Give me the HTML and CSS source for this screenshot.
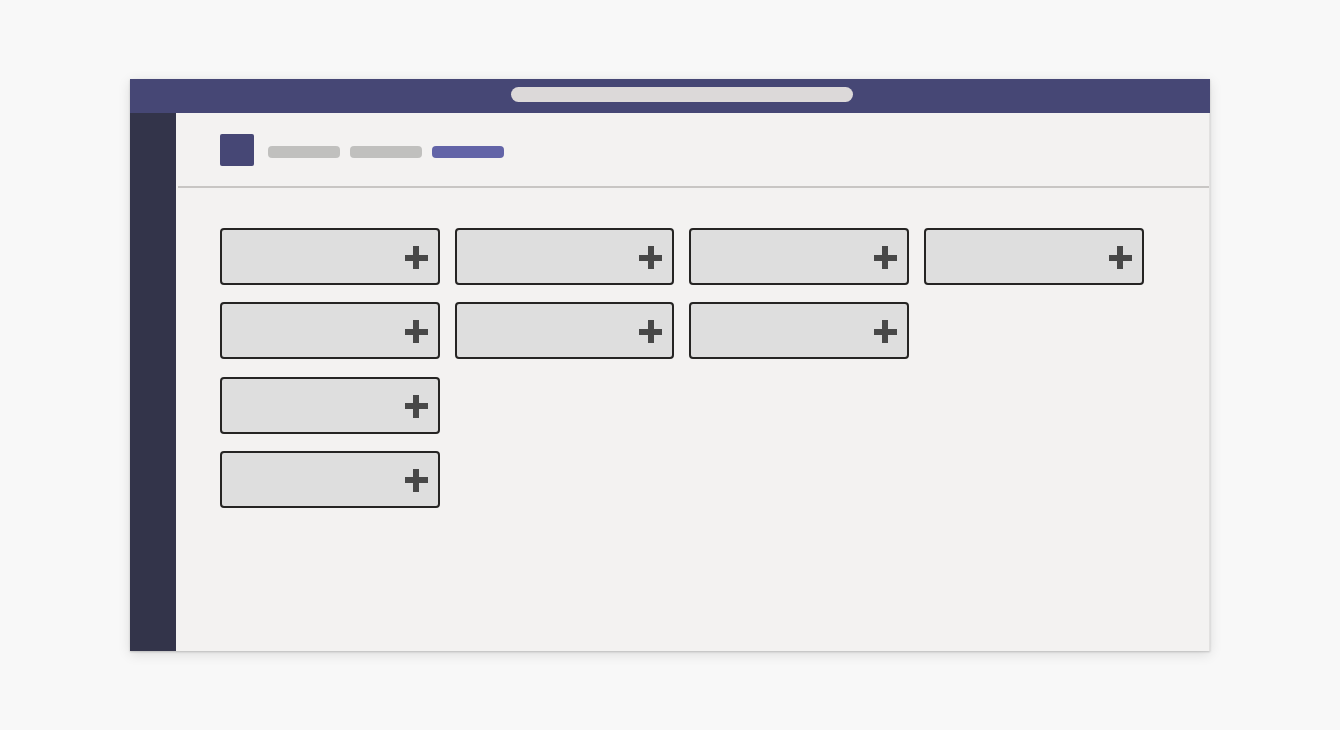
FILE: index.html
```html
<!DOCTYPE html>
<html lang="en">
<head>
<meta charset="utf-8">
<title>App layout</title>
<link rel="stylesheet" href="styles.css">
</head>
<body>
<div class="window">
  <div class="titlebar"><div class="search"></div></div>
  <div class="frame">
    <div class="sidebar"></div>
    <div class="main">
      <div class="header">
        <div class="logo"></div>
        <div class="tabs">
          <div class="tab"></div>
          <div class="tab"></div>
          <div class="tab active"></div>
        </div>
      </div>
      <div class="divider"></div>
      <div class="grid">
        <div class="card"><span class="plus"></span></div>
        <div class="card"><span class="plus"></span></div>
        <div class="card"><span class="plus"></span></div>
        <div class="card"><span class="plus"></span></div>
        <div class="card"><span class="plus"></span></div>
        <div class="card"><span class="plus"></span></div>
        <div class="card"><span class="plus"></span></div>
        <div class="card first-col"><span class="plus"></span></div>
        <div class="card first-col"><span class="plus"></span></div>
      </div>
    </div>
  </div>
</div>
</body>
</html>
```
FILE: styles.css
```css
html, body {
  margin: 0;
  padding: 0;
  background: #f8f8f8;
  font-family: "Liberation Sans", Arial, sans-serif;
}
body {
  padding: 79px 0 0 130px;
  height: 730px;
  box-sizing: border-box;
}
.window {
  width: 1080px;
  height: 572px;
  display: flex;
  flex-direction: column;
  background: #f3f2f1;
  box-shadow: 0 1px 2px rgba(0,0,0,0.18), 0 3px 12px rgba(0,0,0,0.12);
}
.titlebar {
  height: 34px;
  flex: none;
  background: #464775;
  padding: 8px 0 0 381px;
  box-sizing: border-box;
}
.search {
  width: 342px;
  height: 15px;
  border-radius: 8px;
  background: #dcd9d9;
}
.frame {
  flex: 1;
  display: flex;
}
.sidebar {
  width: 46px;
  flex: none;
  background: #33344a;
}
.main {
  flex: 1;
  display: flex;
  flex-direction: column;
  padding-left: 2px;
  border-right: 1px solid #e2e1e0;
}
.header {
  height: 73px;
  box-sizing: border-box;
  padding: 21px 0 0 42px;
  display: flex;
  align-items: flex-start;
}
.logo {
  width: 34px;
  height: 32px;
  background: #464775;
  border-radius: 2px;
}
.tabs {
  display: flex;
  gap: 10px;
  margin: 12px 0 0 14px;
}
.tab {
  width: 72px;
  height: 12px;
  border-radius: 4px;
  background: #c0c0be;
}
.tab.active {
  background: #6264a7;
}
.divider {
  height: 2px;
  background: #c8c6c4;
}
.grid {
  display: grid;
  grid-template-columns: repeat(4, 219.67px);
  grid-auto-rows: 57px;
  column-gap: 15px;
  row-gap: 17.33px;
  padding: 40px 0 0 42px;
}
.card.first-col {
  grid-column: 1;
}
.card {
  position: relative;
  box-sizing: border-box;
  border: 2px solid #252423;
  border-radius: 4px;
  background: #dedede;
}
.plus {
  position: absolute;
  right: 10px;
  top: 16px;
  width: 23px;
  height: 23px;
}
.plus::before,
.plus::after {
  content: "";
  position: absolute;
  background: #484848;
}
.plus::before {
  left: 0;
  right: 0;
  top: 8.5px;
  height: 6px;
}
.plus::after {
  top: 0;
  bottom: 0;
  left: 8.5px;
  width: 6px;
}
```
